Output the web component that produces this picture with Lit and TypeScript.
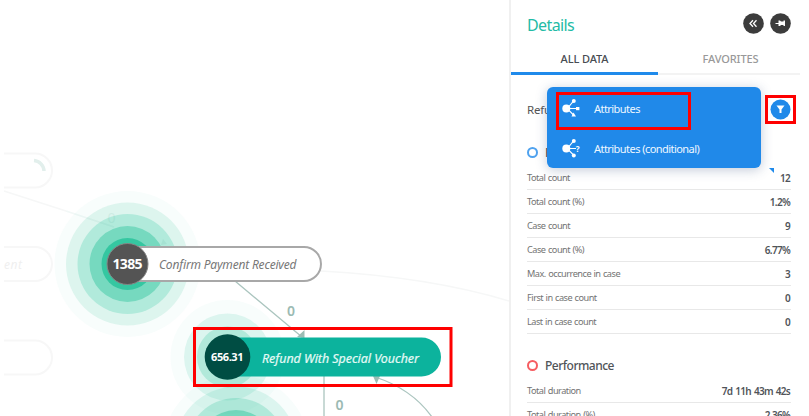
import { LitElement, html, css, svg } from "lit";
import { customElement, property } from "lit/decorators.js";

const FONT = css`"Noto Sans", "Open Sans", sans-serif`;

@customElement("process-map")
class ProcessMap extends LitElement {
  static styles = css`
    :host { display: block; width: 509px; height: 416px; overflow: hidden; }
    svg { display: block; font-family: ${FONT}; }
    .faint { fill: none; stroke: #f7f7f7; stroke-width: 2; }
    .edge { fill: none; stroke: #abc5bf; stroke-width: 1.3; }
    .far { fill: none; stroke: #f6f7f7; stroke-width: 1.5; }
    .tip { fill: #9bbdb5; }
    .italic { font-style: italic; }
    .count { font-size: 14px; font-weight: 600; fill: #9bbab3; }
    .num { fill: #fff; font-weight: 700; }
    .mark { fill: none; stroke: #fe0000; stroke-width: 3; }
  `;

  private rings(cx: number, cy: number, list: [number, string][]) {
    return list.map(([r, fill]) => svg`<circle cx=${cx} cy=${cy} r=${r} fill=${fill}></circle>`);
  }

  render() {
    return html`<svg width="509" height="416" viewBox="0 0 509 416">
      <path class="faint" d="M4 153.500H35A17 17 0 0 1 35 187.500H4M4 247H35A17 17 0 0 1 35 281H4M4 340.500H35A17 17 0 0 1 35 374.500H4" />
      <path d="M34 160.500A11 11 0 0 1 44 171" fill="none" stroke="#e2efec" stroke-width="3.500" />
      <text class="italic" x="4" y="269" font-size="12" fill="#efefef" textLength="18">ent</text>
      ${this.rings(127.5, 264, [[73, "#f8fdfc"], [61.5, "#ddf5ee"], [50, "#b1eadb"], [38, "#76d9bf"], [26, "#35c7a1"]])}
      ${this.rings(227.5, 357, [[57, "rgba(26,191,146,.03)"], [43.5, "rgba(26,191,146,.12)"], [30.5, "rgba(26,191,146,.22)"]])}
      ${this.rings(236, 448, [[73, "rgba(26,191,146,.03)"], [61.5, "rgba(26,191,146,.12)"], [50, "rgba(26,191,146,.22)"], [38, "rgba(26,191,146,.4)"]])}
      <path class="far" d="M4 191L66 211M321 271Q430 277 509 301" />
      <path d="M66 211L114 227" stroke="#1f8a70" stroke-opacity=".06" stroke-width="1.500" />
      <text x="107.500" y="223" font-size="14" fill="#1f8a70" opacity=".08">0</text>
      <path d="M201 245L203 239L207 244Z" transform="translate(-40 0)" fill="#1f8a70" opacity=".08" />
      <path class="edge" d="M235 281L302 337M324 376V416M375 377Q412 389 432 417" />
      <path class="tip" d="M297 337L304.500 330V338ZM373 376H380L376.500 384Z" />
      <path d="M127 247H304A17 17 0 0 1 304 281H127Z" fill="#fff" stroke="#a8a8a8" stroke-width="2" />
      <circle cx="127.500" cy="264" r="20.500" fill="#545454" stroke="#858585" stroke-width="1" />
      <text class="num" x="112.500" y="269.300" font-size="14" textLength="30">1385</text>
      <text class="italic" x="159" y="268.700" font-size="12" fill="#777" textLength="137.500">Confirm Payment Received</text>
      <text class="count" x="287" y="316">0</text>
      <text class="count" x="335.500" y="410">0</text>
      <path d="M227 337.500H421.500A19.500 19.500 0 0 1 421.500 376.500H227Z" fill="#0cb39d" />
      <circle cx="227.500" cy="357" r="22.800" fill="#004d43" />
      <text class="num" x="211" y="361" font-size="11" textLength="32.500">656.31</text>
      <text class="italic" x="262" y="363" font-size="12.500" fill="#e5faf6" stroke="#e5faf6" stroke-width=".2" textLength="157">Refund With Special Voucher</text>
      <rect class="mark" x="194.500" y="328.500" width="256.500" height="57" />
    </svg>`;
  }
}

@customElement("data-row")
class DataRow extends LitElement {
  @property() label = "";
  @property() value = "";
  static styles = css`
    :host { display: flex; box-sizing: border-box; height: 24px; padding-top: 4px; border-bottom: 1px solid #e8e8e8; justify-content: space-between; line-height: 16px; }
    .label { font-size: 9.2px; color: #737373; letter-spacing: -.5px; word-spacing: .5px; }
    .value { font-size: 10px; font-weight: 600; color: #505459; line-height: 17px; letter-spacing: -.7px; word-spacing: 1px; padding-right: 1px; }
  `;
  render() {
    return html`<span class="label">${this.label}</span><span class="value">${this.value}</span>`;
  }
}

const counts = [
  ["Total count", "12"], ["Total count (%)", "1.2%"], ["Case count", "9"], ["Case count (%)", "6.77%"],
  ["Max. occurrence in case", "3"], ["First in case count", "0"], ["Last in case count", "0"],
];
const durations = [["Total duration", "7d 11h 43m 42s"], ["Total duration (%)", "2.36%"]];

@customElement("app-root")
class AppRoot extends LitElement {
  static styles = css`
    :host { display: flex; height: 416px; width: 809px; overflow: hidden; background: #fff; font-family: ${FONT}; }
    .panel { position: relative; box-sizing: border-box; width: 291px; height: 416px; border-left: 2px solid #f0f0f0; flex: none; }
    .head { display: flex; height: 47px; padding: 0 9px 0 16px; align-items: center; justify-content: space-between; }
    .title { font-size: 16px; color: #23bba5; padding-top: 3px; letter-spacing: -.6px; }
    .tools { display: flex; gap: 6px; }
    .tabs { display: flex; height: 28px; box-sizing: border-box; }
    .tab { box-sizing: border-box; flex: 1; padding-left: 3px; text-align: center; font-size: 11px; font-weight: 500; line-height: 23px; letter-spacing: -.1px; color: #999; border-bottom: 2px solid #f3f3f3; }
    .active { flex: none; width: 147px; padding: 0; color: #484c52; border-bottom: 3px solid #1f8aeb; }
    .subject { display: flex; height: 67px; box-sizing: border-box; padding: 2px 10px 0 16px; align-items: center; font-size: 11.5px; color: #555; letter-spacing: -.2px; }
    .section { display: flex; align-items: center; gap: 7px; height: 20px; padding-left: 16px; font-size: 12px; font-weight: 500; color: #505459; letter-spacing: -.5px; }
    .dot { box-sizing: border-box; width: 11px; height: 11px; border: 2px solid #4fa2ef; border-radius: 50%; }
    .red { border-color: #f65d61; }
    .rows { padding: 4px 0 0 16px; width: 264px; }
    .perf { margin-top: 21px; }
    .menu { position: absolute; left: 36px; top: 87px; width: 214px; height: 81px; background: #2089e9; border-radius: 6px; box-shadow: 0 2px 12px rgba(40,70,120,.28); }
    .item { display: flex; height: 40px; align-items: center; padding: 2px 0 0 14px; box-sizing: border-box; gap: 11px; font-size: 11px; letter-spacing: -.55px; color: #eef7ff; }
    .mark { position: absolute; box-sizing: border-box; border: 3px solid #fe0000; }
    .mark-item { left: 45px; top: 92px; width: 135px; height: 38px; }
    .mark-filter { left: 254px; top: 95px; width: 31px; height: 29px; }
    .filter { position: absolute; left: 259px; top: 99px; }
    .corner { position: absolute; left: 258px; top: 168px; }
  `;

  private node(extra: unknown) {
    return html`<svg width="22" height="20" viewBox="0 0 22 20" fill="#fff" stroke="#fff">
      <circle cx="5.300" cy="10.500" r="4" stroke="none" />
      <path d="M5.300 10.500Q9 8 12.500 3M5.300 10.500H15M5.300 10.500Q9 13 12.500 17" fill="none" stroke-width="1.200" />
      <circle cx="12.800" cy="3" r="2" stroke="none" />${extra}</svg>`;
  }

  render() {
    const rows = (list: string[][]) => list.map(([l, v]) => html`<data-row .label=${l} .value=${v}></data-row>`);
    return html`<process-map></process-map>
      <div class="panel">
        <div class="head"><span class="title">Details</span><div class="tools">
          <svg width="21" height="21" viewBox="0 0 21 21"><circle cx="10.500" cy="10.500" r="10.300" fill="#3c3c3c" /><path d="M10 7.300L7 10.500L10 13.700M13.500 7.300L10.500 10.500L13.500 13.700" fill="none" stroke="#fff" stroke-width="1.300" /></svg>
          <svg width="21" height="21" viewBox="0 0 21 21"><circle cx="10.500" cy="10.500" r="10.300" fill="#3c3c3c" /><path d="M5.500 10H8.500V7.500H10L11 8.500H13.500V7.500H15V13H13.500V12H11L10 13H8.500V11H5.500Z" fill="#fff" /></svg>
        </div></div>
        <div class="tabs"><div class="tab active">ALL DATA</div><div class="tab">FAVORITES</div></div>
        <div class="subject"><span>Refund</span></div>
        <div class="section"><span class="dot"></span><span>Frequency</span></div>
        <div class="rows">${rows(counts)}</div>
        <div class="section perf"><span class="dot red"></span><span>Performance</span></div>
        <div class="rows">${rows(durations)}</div>
        <svg class="corner" width="5" height="5"><path d="M0 0H5V5Z" fill="#1f8aeb" /></svg>
        <div class="menu">
          <div class="item">${this.node(svg`<rect x="15" y="9" width="3.400" height="3.200" stroke="none" /><path d="M12.500 14.500L15 18.500H10.500Z" stroke="none" />`)}<span>Attributes</span></div>
          <div class="item">${this.node(svg`<circle cx="12.800" cy="17.500" r="2" stroke="none" /><text x="14.800" y="13.500" font-size="8" font-weight="700" stroke="none">?</text>`)}<span>Attributes (conditional)</span></div>
        </div>
        <div class="mark mark-item"></div>
        <svg class="filter" width="21" height="21" viewBox="0 0 21 21"><circle cx="10.500" cy="10.500" r="10" fill="#2089e9" /><path d="M6.500 6.500H14.500L11.500 10.500V14H9.500V10.500Z" fill="#fff" /></svg>
        <div class="mark mark-filter"></div>
      </div>`;
  }
}
